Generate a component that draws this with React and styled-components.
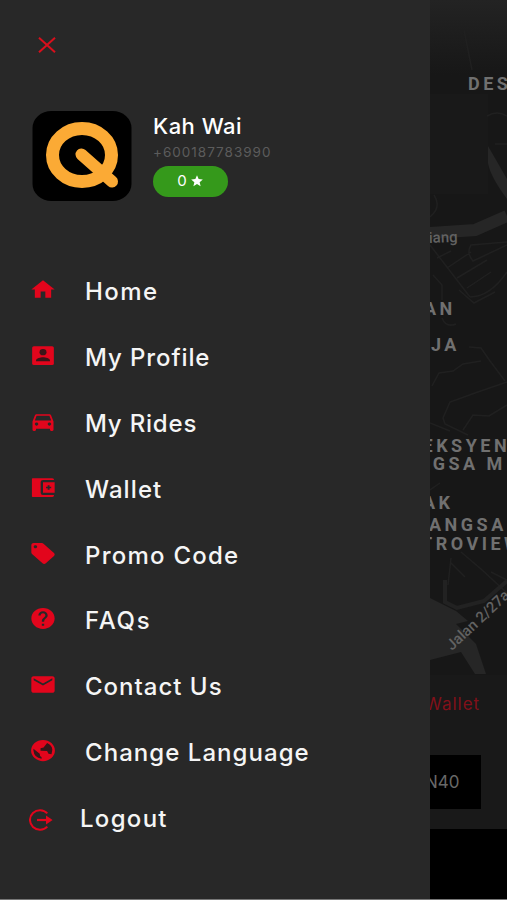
import React from "react";
import styled, { createGlobalStyle } from "styled-components";
import {
  MdHome,
  MdDirectionsCar,
  MdLocalOffer,
  MdHelp,
  MdMail,
  MdStar,
} from "react-icons/md";

const GlobalStyle = createGlobalStyle`
  * {
    box-sizing: border-box;
  }
  body {
    margin: 0;
    background: #181818;
    font-family: Inter, Roboto, sans-serif;
  }
`;

const ProfileIcon = (props) => (
  <svg viewBox="0 0 24 24" {...props}>
    <rect x="2.7" y="3" width="18.6" height="18.2" rx="1.5" fill="currentColor" />
    <g fill="#3b1518">
      <circle cx="12" cy="8.8" r="3" />
      <path d="M6 17.6v-1c0-2 4-3 6-3s6 1 6 3v1z" />
    </g>
  </svg>
);

const WalletIcon = (props) => (
  <svg viewBox="0 0 24 24" fill="currentColor" {...props}>
    <path d="M3.2 3H20q1.5 0 1.5 1.8H12q-2 0-2 2v10.4q0 2 2 2h9.5q0 1.8-1.5 1.8H3.2q-.7 0-.7-.7V3.7q0-.7.7-.7z" />
    <path d="M12 7h10v10H12zM16 9.8v1.4h-1.4v1.6H16v1.4h1.6v-1.4H19v-1.6h-1.4V9.8z" fillRule="evenodd" />
  </svg>
);

const GlobeIcon = (props) => (
  <svg viewBox="0 0 24 24" {...props}>
    <circle cx="12" cy="12" r="10.2" fill="currentColor" />
    <g fill="#35171a">
      <path d="M15.5 4.7q4.2 2 4.5 6.5l-.7 4.3-2.6-.5-1.2-2.6-5.6-.2V9.8l2.6-.8 1.7-2.2z" />
      <path d="M3.8 10.2l5.4 5 .3 2 1.3 1.2v1.6q-6.5-1.2-7-7.9z" />
    </g>
  </svg>
);

const LogoutIcon = (props) => (
  <svg viewBox="0 0 24 22" fill="none" stroke="currentColor" {...props}>
    <path d="M18.3 4.4A10 9.7 0 1 0 18.3 17.6" strokeWidth="2" />
    <path d="M8 11h11" strokeWidth="2.2" />
    <path d="M17 6.6l6.6 4.4-6.6 4.4z" fill="currentColor" stroke="none" />
  </svg>
);

const menu = [
  { label: "Home", Icon: MdHome, spacing: 1.4 },
  { label: "My Profile", Icon: ProfileIcon, spacing: 0.9 },
  { label: "My Rides", Icon: MdDirectionsCar, spacing: 0.8 },
  { label: "Wallet", Icon: WalletIcon, spacing: 1.1 },
  { label: "Promo Code", Icon: MdLocalOffer, spacing: 1.25 },
  { label: "FAQs", Icon: MdHelp, spacing: 1.7 },
  { label: "Contact Us", Icon: MdMail, spacing: 1 },
  { label: "Change Language", Icon: GlobeIcon, spacing: 1.05 },
];

const App = () => {
  return (
    <>
      <GlobalStyle />
      <Screen>
        <Drawer>
          <Close viewBox="0 0 18 16">
            <path d="M1 .8 17 15.2M17 .8 1 15.2" />
          </Close>
          <Profile>
            <Avatar viewBox="0 0 99 90">
              <rect width="99" height="90" rx="19" ry="17" fill="#000" />
              <ellipse cx="49.5" cy="44" rx="29.5" ry="26.5" />
              <path d="M49 43.5 79.5 70.5" />
            </Avatar>
            <Info>
              <Name>Kah Wai</Name>
              <Phone>+600187783990</Phone>
              <Rating>
                0 <MdStar />
              </Rating>
            </Info>
          </Profile>
          <Menu>
            {menu.map(({ label, Icon, spacing }) => (
              <Item key={label}>
                <Icon preserveAspectRatio="none" />
                <Label $spacing={spacing}>{label}</Label>
              </Item>
            ))}
            <Item $logout>
              <LogoutIcon />
              <Label $spacing={1.3}>Logout</Label>
            </Item>
          </Menu>
        </Drawer>
        <Backdrop>
          <Map viewBox="430 0 77 675">
            <defs>
              <linearGradient id="shade" x1="0" y1="0" x2="0" y2="1">
                <stop offset="0" stopColor="#232323" />
                <stop offset="1" stopColor="#171717" />
              </linearGradient>
            </defs>
            <rect x="430" y="0" width="77" height="675" fill="#171717" />
            <rect x="430" y="0" width="77" height="75" fill="url(#shade)" />
            <rect x="430" y="94" width="58" height="100" fill="#191919" />
            <g fill="none" stroke="#202020" strokeWidth="1.5">
              <path d="M464 30l8 40M487 116q10-6 20 0M495 144h12M434 195q8 12-4 22" />
              <path d="M430 245l40 52M437 258l14-7M447 268l24-16M457 278l30-18M467 288l24-16M507 242l-36 3q-5 8 2 16l34-16M433 275l9 10v15M470 297q20 0 37-25" />
              <path d="M459 290l15 13 21-11M442 318q4 10 14 6M432 386l7-13 14-2 10-7 18-3M469 347l12 1 9 13 15 20M507 382l-32 11-25 9-7 16 2 6 23 11M463 430l10-15 16 1 18-11M430 423l20 8" />
              <path d="M430 490l10-7M461 552l20 17 26 24M448 585l3-27M451 563l14 14M491 572l16 8" />
            </g>
            <path d="M430 233l45-3 32-14" fill="none" stroke="#262626" strokeWidth="12" />
            <path d="M488 146l19 33v20q-17-23-19-36z" fill="#262626" />
            <path d="M430 598l26 13 12 10-12 3 20 20 10 30-11 0-14-22-31 8z" fill="#262626" />
            <path d="M445 580v22l12 6 27-7 23-20" fill="none" stroke="#222" strokeWidth="4" />
            <Area>
              <text x="468" y="90">DES</text>
              <text x="424" y="315">AN</text>
              <text x="431" y="351">JA</text>
              <text x="422.5" y="452">EKSYEN</text>
              <text x="416.5" y="470">NGSA M</text>
              <text x="423" y="509">AK</text>
              <text x="429" y="531">ANGSA</text>
              <text x="421" y="550">TROVIEW</text>
            </Area>
            <Street x="429" y="243" transform="rotate(-2 429 243)">iang</Street>
            <Street x="452" y="651" transform="rotate(-43 452 651)">Jalan 2/27a</Street>
          </Map>
          <Sheet>
            <WalletLink>Wallet</WalletLink>
            <Coupon>N40</Coupon>
          </Sheet>
        </Backdrop>
      </Screen>
    </>
  );
};

const Screen = styled.div`
  display: flex;
  height: 900px;
  overflow: hidden;
  background: #000;
  border-bottom: 1px solid #777;
`;

const Drawer = styled.aside`
  flex: 0 0 430px;
  background: #282828;
  padding: 37px 29px 0 32px;
`;

const Close = styled.svg`
  display: block;
  width: 18px;
  height: 16px;
  margin-left: 6px;
  fill: none;
  stroke: #d90f1c;
  stroke-width: 2;
`;

const Profile = styled.div`
  display: flex;
  gap: 21px;
  margin-top: 58px;
`;

const Avatar = styled.svg`
  width: 100px;
  height: 90px;
  ellipse,
  path {
    fill: none;
    stroke: #fbaa35;
    stroke-width: 13;
    stroke-linecap: round;
  }
  path {
    stroke-width: 12;
  }
`;

const Info = styled.div`
  display: flex;
  flex-direction: column;
  align-items: flex-start;
`;

const Name = styled.div`
  color: #fff;
  font-size: 22px;
  font-weight: 500;
  line-height: 30px;
  letter-spacing: 0.5px;
`;

const Phone = styled.div`
  color: #5c5c5c;
  font-size: 13.5px;
  line-height: 23px;
  letter-spacing: 1px;
`;

const Rating = styled.div`
  display: flex;
  align-items: center;
  justify-content: center;
  gap: 3px;
  width: 75px;
  height: 31px;
  margin-top: 2px;
  padding-bottom: 3px;
  border-radius: 16px;
  background: #35991b;
  color: #fff;
  font-size: 15px;
  svg {
    width: 14px;
    height: 14px;
    margin-top: 2px;
  }
`;

const Menu = styled.nav`
  margin-top: 58px;
`;

const Item = styled.div`
  display: flex;
  align-items: center;
  gap: ${(props) => (props.$logout ? "27px" : "28px")};
  height: 65.92px;
  margin-left: -3px;
  color: #e2051c;
  svg {
    width: ${(props) => (props.$logout ? "24px" : "28px")};
    height: ${(props) => (props.$logout ? "22px" : "25px")};
    margin-top: ${(props) => (props.$logout ? "1px" : "-5px")};
  }
`;

const Label = styled.span`
  color: #f5f5f5;
  font-size: 24px;
  font-weight: 500;
  line-height: 30px;
  letter-spacing: ${(props) => props.$spacing}px;
  white-space: nowrap;
`;

const Backdrop = styled.main`
  flex: 1;
  min-width: 0;
  overflow: hidden;
`;

const Map = styled.svg`
  display: block;
  width: 77px;
  height: 675px;
`;

const Area = styled.g`
  fill: #707070;
  font-family: Roboto, sans-serif;
  font-size: 18px;
  font-weight: 700;
  letter-spacing: 3.5px;
`;

const Street = styled.text`
  fill: #626262;
  font-family: Roboto, sans-serif;
  font-size: 15px;
  font-weight: 500;
`;

const Sheet = styled.section`
  height: 154px;
  padding-top: 17px;
  background: #191919;
`;

const WalletLink = styled.div`
  color: #82101a;
  font-size: 17px;
  line-height: 24px;
  margin-left: -5px;
  letter-spacing: 1px;
`;

const Coupon = styled.div`
  width: 51px;
  height: 54px;
  margin-top: 39px;
  background: #000;
  color: #686868;
  font-size: 17px;
  line-height: 54px;
  text-indent: -5px;
  overflow: hidden;
`;

export default App;
